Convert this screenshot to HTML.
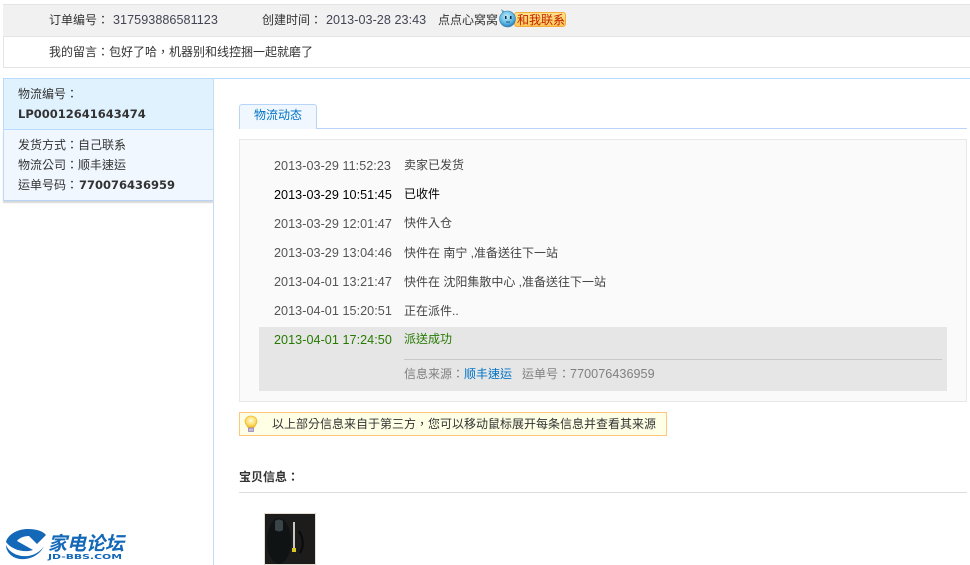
<!DOCTYPE html>
<html lang="zh-TW">
<head>
<meta charset="utf-8">
<title>物流动态</title>
<style>
html,body{margin:0;padding:0;background:#fff;}
body{width:970px;height:565px;position:relative;overflow:hidden;font-family:"Liberation Sans","Noto Sans CJK TC",sans-serif;font-size:12px;color:#333;}
.b{position:absolute;box-sizing:border-box;}
.t{position:absolute;white-space:nowrap;line-height:16px;}
.n{letter-spacing:.05px;font-size:12.6px;}
.d{color:#555;letter-spacing:.05px;font-size:12.6px;left:274px;}
.m{color:#444;left:404px;}
.bd{font-family:"DejaVu Sans","Noto Sans CJK TC",sans-serif;font-weight:bold;font-size:11.5px;color:#333;}
a{color:#0073c6;text-decoration:none;}
</style>
</head>
<body>
<div class="b" style="left:3px;top:4px;width:967px;height:33px;background:#f1f1f1;border-top:1px solid #e4e4e4;border-bottom:1px solid #e4e4e4;"></div>
<div class="b" style="left:3px;top:37px;width:967px;height:31px;background:#fff;border-left:1px solid #e4e4e4;border-bottom:1px solid #e4e4e4;"></div>
<span class="t" style="left:49px;top:12px;">订单编号：</span>
<span class="t n" style="left:113px;top:12px;color:#445;">317593886581123</span>
<span class="t" style="left:262px;top:12px;">创建时间：</span>
<span class="t n" style="left:326px;top:12px;color:#445;">2013-03-28 23:43</span>
<span class="t" style="left:438px;top:12px;">点点心窝窝</span>
<div class="b" style="left:514px;top:12px;width:52px;height:15px;background:linear-gradient(#ffe48c,#ffc858);border:1px solid #f5ab3c;border-radius:3px;"></div>
<span class="t" style="left:517px;top:12px;color:#c02000;">和我联系</span>
<svg style="position:absolute;left:498px;top:8px;" width="20" height="20" viewBox="0 0 20 20">
<defs><radialGradient id="q" cx=".45" cy=".35" r=".7"><stop offset="0" stop-color="#c8ecfa"/><stop offset=".6" stop-color="#5cb8e4"/><stop offset="1" stop-color="#1f6fb0"/></radialGradient></defs>
<path d="M3 1 L9 5 L5 7 Z" fill="#5fa8d0"/>
<circle cx="9.500" cy="11" r="8" fill="url(#q)" stroke="#3a80b0" stroke-width=".6"/>
<rect x="7" y="8" width="1.500" height="3" fill="#0a2a44"/><rect x="12" y="8" width="1.500" height="3" fill="#0a2a44"/>
<path d="M8 14 H12" stroke="#0a3a60" stroke-width=".8"/>
</svg>
<span class="t" style="left:49px;top:44px;">我的留言：包好了哈，机器别和线控捆一起就磨了</span>

<div class="b" style="left:3px;top:78px;width:967px;height:1px;background:#b8dcff;"></div>
<div class="b" style="left:213px;top:78px;width:1px;height:487px;background:#c4dcf4;"></div>
<div class="b" style="left:3px;top:79px;width:210px;height:51px;background:#e1f2ff;border-left:1px solid #b8dcff;border-bottom:1px solid #b8dcff;"></div>
<div class="b" style="left:3px;top:130px;width:210px;height:71px;background:#f0f7ff;border-left:1px solid #b8dcff;border-bottom:1px solid #b8d6f4;box-shadow:0 2px 1px #d8d8d8;"></div>
<span class="t" style="left:18px;top:86px;">物流编号：</span>
<span class="t bd" style="left:18px;top:106px;">LP00012641643474</span>
<span class="t" style="left:18px;top:137px;">发货方式：自己联系</span>
<span class="t" style="left:18px;top:157px;">物流公司：顺丰速运</span>
<span class="t" style="left:18px;top:177px;">运单号码：<span class="bd" style="margin-left:1px;">770076436959</span></span>

<div class="b" style="left:239px;top:128px;width:728px;height:1px;background:#b8d4fa;"></div>
<div class="b" style="left:239px;top:104px;width:78px;height:25px;background:#f0f7ff;border:1px solid #b8d4fa;border-bottom:none;border-radius:3px 3px 0 0;"></div>
<span class="t" style="left:254px;top:107px;color:#0073c6;">物流动态</span>

<div class="b" style="left:239px;top:139px;width:728px;height:263px;background:#fafafa;border:1px solid #e8e8e8;"></div>
<div class="b" style="left:259px;top:327px;width:688px;height:64px;background:#e6e6e6;"></div>
<div class="b" style="left:404px;top:359px;width:538px;height:1px;background:#c8c8c8;"></div>

<span class="t d" style="top:158px;">2013-03-29 11:52:23</span><span class="t m" style="top:157px;">卖家已发货</span>
<span class="t d" style="top:187px;color:#000;">2013-03-29 10:51:45</span><span class="t m" style="top:186px;color:#000;">已收件</span>
<span class="t d" style="top:216px;">2013-03-29 12:01:47</span><span class="t m" style="top:215px;">快件入仓</span>
<span class="t d" style="top:245px;">2013-03-29 13:04:46</span><span class="t m" style="top:245px;">快件在 南宁 ,准备送往下一站</span>
<span class="t d" style="top:274px;">2013-04-01 13:21:47</span><span class="t m" style="top:274px;">快件在 沈阳集散中心 ,准备送往下一站</span>
<span class="t d" style="top:303px;">2013-04-01 15:20:51</span><span class="t m" style="top:303px;">正在派件..</span>
<span class="t d" style="top:332px;color:#267a00;">2013-04-01 17:24:50</span><span class="t m" style="top:331px;color:#267a00;">派送成功</span>
<span class="t" style="left:404px;top:366px;color:#808080;">信息来源：<a>顺丰速运</a></span>
<span class="t" style="left:522px;top:366px;color:#808080;">运单号：<span class="n">770076436959</span></span>

<div class="b" style="left:239px;top:412px;width:428px;height:24px;background:#ffffe6;border:1px solid #ffc878;"></div>
<svg style="position:absolute;left:243px;top:415px;" width="16" height="18" viewBox="0 0 16 18">
<defs><radialGradient id="l" cx=".5" cy=".4" r=".6"><stop offset="0" stop-color="#fffbe0"/><stop offset=".6" stop-color="#ffe070"/><stop offset="1" stop-color="#f5b820"/></radialGradient></defs>
<path d="M8 1 C4.500 1 2 3.500 2 6.500 C2 9 4 10.500 5 12.500 H11 C12 10.500 14 9 14 6.500 C14 3.500 11.500 1 8 1 Z" fill="url(#l)" stroke="#f0b830" stroke-width=".7"/>
<rect x="5.500" y="13" width="5" height="3.500" fill="#c8b8e0" stroke="#7868a8" stroke-width=".6"/>
</svg>
<span class="t" style="left:272px;top:416px;">以上部分信息来自于第三方，您可以移动鼠标展开每条信息并查看其来源</span>

<span class="t" style="left:239px;top:469px;font-weight:bold;color:#333;">宝贝信息：</span>
<div class="b" style="left:239px;top:492px;width:728px;height:1px;background:#ddd;"></div>

<svg style="position:absolute;left:264px;top:513px;" width="52" height="52" viewBox="0 0 52 52">
<rect x=".5" y=".5" width="51" height="51" fill="#1c1c1c" stroke="#e6dcd2"/>
<ellipse cx="15" cy="28" rx="12" ry="23" fill="#101314"/>
<path d="M11 8 Q15 5 19 8 L19 17 Q15 20 11 17 Z" fill="#3a4448"/>
<path d="M29 9 L31 9 L31 35 L29 35 Z" fill="#c8c8c0"/>
<rect x="28" y="35" width="4" height="4" fill="#d8c820"/>
<path d="M35 18 Q42 30 36 40" stroke="#0a0a0a" stroke-width="2" fill="none"/>
</svg>

<svg style="position:absolute;left:0;top:522px;" width="130" height="43" viewBox="0 0 130 43">
<path d="M6 20 C8 12 18 7 28 7 C36 7 43 9 46 13 L37 22 L29 14 C24 14 19 16 17 19 L33 28 C24 31 12 28 6 20 Z" fill="#1468b8"/>
<path d="M6 23 C10 32 20 35 28 34 C35 33 41 29 44 24 C40 33 30 38 20 37 C12 36 6 30 6 23 Z" fill="#1468b8"/>
<text x="48" y="28" font-family="'Noto Sans CJK SC',sans-serif" font-weight="bold" font-style="italic" font-size="19" fill="#1468b8" textLength="76">家电论坛</text>
<text x="48" y="37" font-family="'DejaVu Sans',sans-serif" font-weight="bold" font-size="7" fill="#1468b8" textLength="74" lengthAdjust="spacingAndGlyphs">JD-BBS.COM</text>
</svg>
</body>
</html>
